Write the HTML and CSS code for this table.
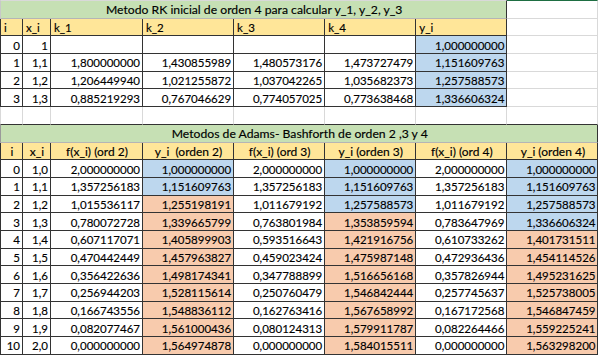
FILE: index.html
```html
<!DOCTYPE html>
<html lang="es">
<head>
<meta charset="utf-8">
<title>Metodos RK y Adams-Bashforth</title>
<link rel="stylesheet" href="styles.css">
</head>
<body>
<div class="sheet">
  <!-- row 1 -->
  <div class="c fl t tt g span7 ce title title1">Metodo RK inicial de orden 4 para calcular y_1, y_2, y_3</div>
  <div class="c tt sel"></div>
  <!-- row 2 -->
  <div class="c fl fd t h l">i</div>
  <div class="c t h l">x_i</div>
  <div class="c t h l">k_1</div>
  <div class="c t h l">k_2</div>
  <div class="c t h l">k_3</div>
  <div class="c t h l">k_4</div>
  <div class="c t h l">y_i</div>
  <div class="c"></div>
  <!-- row 3 -->
  <div class="c fl fd t r">0</div>
  <div class="c t r">1</div>
  <div class="c t r"></div>
  <div class="c t r"></div>
  <div class="c t r"></div>
  <div class="c t r"></div>
  <div class="c t r b">1,000000000</div>
  <div class="c"></div>
  <!-- row 4 -->
  <div class="c fl fd t r">1</div>
  <div class="c t r">1,1</div>
  <div class="c t r">1,800000000</div>
  <div class="c t r">1,430855989</div>
  <div class="c t r">1,480573176</div>
  <div class="c t r">1,473727479</div>
  <div class="c t r b">1,151609763</div>
  <div class="c"></div>
  <!-- row 5 -->
  <div class="c fl fd t r">2</div>
  <div class="c t r">1,2</div>
  <div class="c t r">1,206449940</div>
  <div class="c t r">1,021255872</div>
  <div class="c t r">1,037042265</div>
  <div class="c t r">1,035682373</div>
  <div class="c t r b">1,257588573</div>
  <div class="c"></div>
  <!-- row 6 -->
  <div class="c fl fd t r">3</div>
  <div class="c t r">1,3</div>
  <div class="c t r">0,885219293</div>
  <div class="c t r">0,767046629</div>
  <div class="c t r">0,774057025</div>
  <div class="c t r">0,773638468</div>
  <div class="c t r b">1,336606324</div>
  <div class="c"></div>
  <!-- row 7 (empty) -->
  <div class="c fl ab"></div>
  <div class="c ab"></div>
  <div class="c ab"></div>
  <div class="c ab"></div>
  <div class="c ab"></div>
  <div class="c ab"></div>
  <div class="c ab"></div>
  <div class="c ab"></div>
  <!-- row 8 -->
  <div class="c fl t g span8 ce title title2">Metodos de Adams- Bashforth de orden 2 ,3 y 4</div>
  <!-- row 9 -->
  <div class="c fl fd t h ce">i</div>
  <div class="c t h ce">x_i</div>
  <div class="c t h ce">f(x_i) (ord 2)</div>
  <div class="c t h ce pre">y_i  (orden 2)</div>
  <div class="c t h ce">f(x_i) (ord 3)</div>
  <div class="c t h ce">y_i (orden 3)</div>
  <div class="c t h ce">f(x_i) (ord 4)</div>
  <div class="c t h ce">y_i (orden 4)</div>
  <!-- data rows -->
  <div class="c fl fd t r">0</div><div class="c t r">1,0</div><div class="c t r">2,000000000</div><div class="c t r b">1,000000000</div><div class="c t r">2,000000000</div><div class="c t r b">1,000000000</div><div class="c t r">2,000000000</div><div class="c t r b">1,000000000</div>
  <div class="c fl fd t r">1</div><div class="c t r">1,1</div><div class="c t r">1,357256183</div><div class="c t r b">1,151609763</div><div class="c t r">1,357256183</div><div class="c t r b">1,151609763</div><div class="c t r">1,357256183</div><div class="c t r b">1,151609763</div>
  <div class="c fl fd t r">2</div><div class="c t r">1,2</div><div class="c t r">1,015536117</div><div class="c t r o">1,255198191</div><div class="c t r">1,011679192</div><div class="c t r b">1,257588573</div><div class="c t r">1,011679192</div><div class="c t r b">1,257588573</div>
  <div class="c fl fd t r">3</div><div class="c t r">1,3</div><div class="c t r">0,780072728</div><div class="c t r o">1,339665799</div><div class="c t r">0,763801984</div><div class="c t r o">1,353859594</div><div class="c t r">0,783647969</div><div class="c t r b">1,336606324</div>
  <div class="c fl fd t r">4</div><div class="c t r">1,4</div><div class="c t r">0,607117071</div><div class="c t r o">1,405899903</div><div class="c t r">0,593516643</div><div class="c t r o">1,421916756</div><div class="c t r">0,610733262</div><div class="c t r o">1,401731511</div>
  <div class="c fl fd t r">5</div><div class="c t r">1,5</div><div class="c t r">0,470442449</div><div class="c t r o">1,457963827</div><div class="c t r">0,459023424</div><div class="c t r o">1,475987148</div><div class="c t r">0,472936436</div><div class="c t r o">1,454114526</div>
  <div class="c fl fd t r">6</div><div class="c t r">1,6</div><div class="c t r">0,356422636</div><div class="c t r o">1,498174341</div><div class="c t r">0,347788899</div><div class="c t r o">1,516656168</div><div class="c t r">0,357826944</div><div class="c t r o">1,495231625</div>
  <div class="c fl fd t r">7</div><div class="c t r">1,7</div><div class="c t r">0,256944203</div><div class="c t r o">1,528115614</div><div class="c t r">0,250760479</div><div class="c t r o">1,546842444</div><div class="c t r">0,257745637</div><div class="c t r o">1,525738005</div>
  <div class="c fl fd t r">8</div><div class="c t r">1,8</div><div class="c t r">0,166743556</div><div class="c t r o">1,548836112</div><div class="c t r">0,162763416</div><div class="c t r o">1,567658992</div><div class="c t r">0,167172568</div><div class="c t r o">1,546847459</div>
  <div class="c fl fd t r">9</div><div class="c t r">1,9</div><div class="c t r">0,082077467</div><div class="c t r o">1,561000436</div><div class="c t r">0,080124313</div><div class="c t r o">1,579911787</div><div class="c t r">0,082264466</div><div class="c t r o">1,559225241</div>
  <div class="c fl fd t r">10</div><div class="c t r">2,0</div><div class="c t r">0,000000000</div><div class="c t r o">1,564974878</div><div class="c t r">0,000000000</div><div class="c t r o">1,584015511</div><div class="c t r">0,000000000</div><div class="c t r o">1,563298200</div>
</div>
</body>
</html>
```

FILE: styles.css
```css
html, body {
  margin: 0;
  padding: 0;
  background: #ffffff;
}

.sheet {
  display: grid;
  grid-template-columns: 23px 28px 92px repeat(5, 91.1px);
  grid-template-rows: 18.7px repeat(19, 17.7px);
  font-family: Lato, "Liberation Sans", sans-serif;
  font-size: 11.5px;
  color: #000;
  width: 600px;
  -webkit-text-stroke: 0.15px #000;
}

.c {
  box-sizing: border-box;
  border-right: 1px solid #d9d9d9;
  border-bottom: 1px solid #d9d9d9;
  display: flex;
  align-items: center;
  padding: 1px 2px 0 3px;
  white-space: nowrap;
  overflow: hidden;
  min-width: 0;
}

.tt { border-top: 1px solid #d9d9d9; }
.sel { border-top-color: #1e6e42; }

.fl { border-left: 1px solid #d9d9d9; }
.fd { border-left-color: #333; }

.t {
  border-right-color: #333;
  border-bottom-color: #333;
}

.ab { border-bottom-color: #333; }

.l { justify-content: flex-start; }
.r { justify-content: flex-end; }
.ce { justify-content: center; font-size: 12px; }
.pre { white-space: pre; }

.g { background: #c6e0b4; }
.h { background: #ffe699; }
.b { background: #bdd7ee; }
.o { background: #f8cbad; }

.span7 { grid-column: span 7; }
.span8 { grid-column: span 8; }

.title { font-size: 12.2px; }
.title1 {
  border-bottom-color: #b5b5b5;
  border-left-color: #c8c8c8;
}
.title2 {
  border-bottom-color: #b5b5b5;
  border-left-color: #9a9a9a;
}
```
